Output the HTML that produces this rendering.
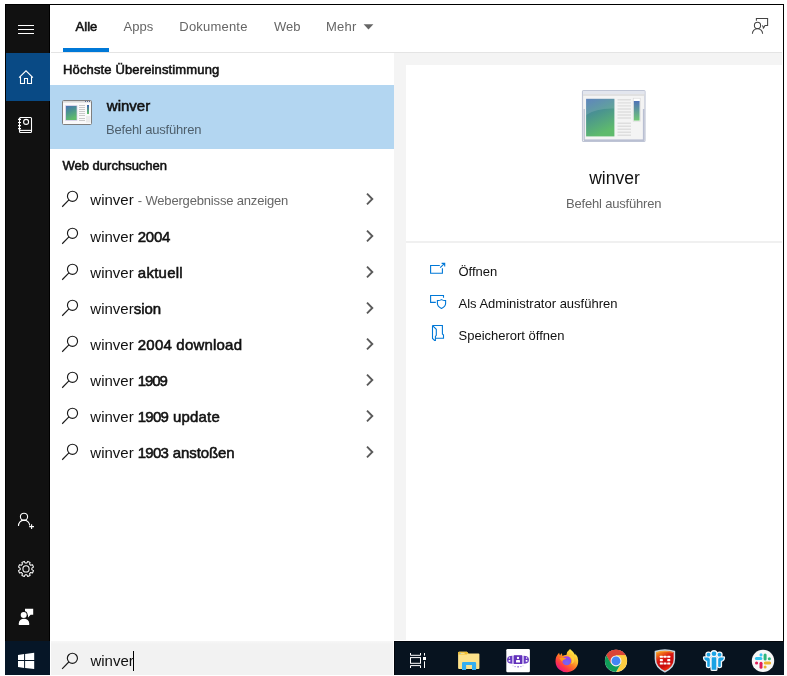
<!DOCTYPE html>
<html>
<head>
<meta charset="utf-8">
<title>winver</title>
<style>
html,body{margin:0;padding:0;}
body{width:787px;height:676px;background:#fff;position:relative;overflow:hidden;font-family:"Liberation Sans",sans-serif;color:#000;}
.a{position:absolute;}
.t{position:absolute;white-space:nowrap;line-height:1;}
svg{position:absolute;overflow:visible;}
.row{position:absolute;left:50px;width:344px;height:36px;}
.row .q{position:absolute;left:40.3px;top:11px;font-size:15px;line-height:1;white-space:nowrap;color:#111;}
.row .q b,.sb{font-weight:normal;-webkit-text-stroke:0.55px currentColor;}
</style>
</head>
<body>
<div id="all" style="position:absolute;left:0;top:0;width:787px;height:676px;will-change:transform;">
<!-- frame -->
<div class="a" style="left:5px;top:4px;width:779px;height:1px;background:#000;"></div>
<div class="a" style="left:783px;top:4px;width:1px;height:638px;background:#000;"></div>

<!-- sidebar -->
<div class="a" style="left:5px;top:4px;width:1px;height:637px;background:#000;z-index:3;"></div>
<div class="a" id="sidebar" style="left:5px;top:5px;width:45px;height:636px;background:#111;"></div>
<div class="a" style="left:5px;top:53px;width:45px;height:48px;background:#094a85;"></div>

<div class="a" style="left:49px;top:5px;width:1px;height:48px;background:#000;"></div>
<div class="a" style="left:49px;top:101px;width:1px;height:540px;background:#000;"></div>
<!-- tabs -->
<div id="tab1" class="t sb" style="left:75.6px;top:20px;font-size:13px;color:#111;">Alle</div>
<div class="t" id="tab2" style="left:123.5px;top:20px;font-size:13px;color:#666;">Apps</div>
<div class="t" id="tab3" style="left:179.3px;top:20px;font-size:13px;color:#666;letter-spacing:0.2px;">Dokumente</div>
<div class="t" id="tab4" style="left:274px;top:20px;font-size:13px;color:#666;">Web</div>
<div class="t" id="tab5" style="left:326px;top:20px;font-size:13px;color:#666;letter-spacing:0.25px;">Mehr</div>
<div class="a" style="left:63px;top:48px;width:46px;height:4px;background:#0078d7;"></div>
<div class="a" style="left:51px;top:52px;width:731px;height:1px;background:#e4e4e4;"></div>

<!-- right gutter + card -->
<div class="a" style="left:394px;top:53px;width:388px;height:12px;background:#f4f4f4;"></div>
<div class="a" style="left:394px;top:53px;width:12px;height:587px;background:#f4f4f4;"></div>
<div class="a" style="left:406px;top:241px;width:376px;height:2px;background:#f0f0f0;"></div>

<!-- left list -->
<div class="t sb" id="h1" style="left:63px;top:63px;font-size:13px;color:#111;letter-spacing:0.14px;">Höchste Übereinstimmung</div>
<div class="a" style="left:50px;top:85px;width:344px;height:64px;background:#b3d6f1;"></div>
<div class="t sb" id="best" style="left:106.8px;top:98px;font-size:15px;color:#111;">winver</div>
<div class="t" id="bestsub" style="left:106px;top:123px;font-size:13px;color:#4e5f6c;letter-spacing:-0.19px;">Befehl ausführen</div>
<div class="t sb" id="h2" style="left:62.5px;top:159px;font-size:13px;color:#111;">Web durchsuchen</div>

<div class="row" style="top:181px;"><div class="q">winver <span style="font-size:13px;color:#666;letter-spacing:-0.17px;">- Webergebnisse anzeigen</span></div></div>
<div class="row" style="top:218px;"><div class="q">winver <b id="r1" style="letter-spacing:-0.3px;">2004</b></div></div>
<div class="row" style="top:254px;"><div class="q">winver <b id="r2" style="letter-spacing:0.25px;">aktuell</b></div></div>
<div class="row" style="top:290px;"><div class="q">winver<b id="r3">sion</b></div></div>
<div class="row" style="top:326px;"><div class="q">winver <b id="r4" style="letter-spacing:0.2px;">2004 download</b></div></div>
<div class="row" style="top:362px;"><div class="q">winver <b id="r5" style="letter-spacing:-1.1px;">1909</b></div></div>
<div class="row" style="top:398px;"><div class="q">winver <b id="r6" style="letter-spacing:0.15px;"><span style="letter-spacing:-0.8px;margin-right:0.8px;">1909</span> update</b></div></div>
<div class="row" style="top:434px;"><div class="q">winver <b id="r7" style="letter-spacing:-0.1px;"><span style="letter-spacing:-0.8px;margin-right:0.8px;">1903</span> anstoßen</b></div></div>

<!-- right card -->
<div class="t" id="ctitle" style="left:589.2px;top:169.5px;font-size:17.5px;color:#111;">winver</div>
<div class="t" id="csub" style="left:566px;top:197px;font-size:13px;color:#666;letter-spacing:-0.19px;">Befehl ausführen</div>
<div class="t" id="act1" style="left:458.5px;top:265px;font-size:13px;color:#111;">Öffnen</div>
<div class="t" id="act2" style="left:458.5px;top:297px;font-size:13px;color:#111;">Als Administrator ausführen</div>
<div class="t" id="act3" style="left:458.5px;top:329px;font-size:13px;color:#111;">Speicherort öffnen</div>

<!-- taskbar -->
<div class="a" style="left:5px;top:641px;width:779px;height:34px;background:#07131f;"></div>
<div class="a" style="left:5px;top:641px;width:45px;height:34px;background:#061627;"></div>
<div class="a" style="left:394px;top:641px;width:390px;height:1px;background:#02060c;"></div>
<div class="a" style="left:394px;top:641px;width:1px;height:34px;background:#02060c;"></div>
<div class="a" style="left:50px;top:641px;width:344px;height:34px;background:#fff;"></div>
<div class="a" style="left:51px;top:641px;width:342px;height:34px;background:linear-gradient(#f7f7f7,#f2f2f2 3px);"></div>
<div class="t" id="sbox" style="left:90.4px;top:653px;font-size:15px;color:#111;">winver</div>
<div class="a" style="left:133px;top:651px;width:1px;height:20px;background:#000;"></div>

<svg id="ov" width="787" height="676" viewBox="0 0 787 676" style="left:0;top:0;">
<defs>
<g id="mag" fill="none" stroke="#1a1a1a" stroke-width="1.15"><circle cx="0" cy="0" r="5.05"/><path d="M-3.6,3.7 L-10.3,10.5"/></g>
<g id="chev" fill="none" stroke="#5a5a5a" stroke-width="1.9"><path d="M-5.3,-5.3 L0,0 L-5.3,5.3"/></g>
<linearGradient id="pic" x1="0" y1="0" x2="0.35" y2="1"><stop offset="0" stop-color="#4873b4"/><stop offset="0.45" stop-color="#4a9390"/><stop offset="1" stop-color="#5fbb6c"/></linearGradient>
<linearGradient id="bar" x1="0" y1="0" x2="0" y2="1"><stop offset="0" stop-color="#3a62b0"/><stop offset="1" stop-color="#62c266"/></linearGradient>
</defs>

<!-- list icons -->
<use href="#mag" x="72.5" y="196.25"/>
<use href="#chev" x="372.3" y="199.00"/>
<use href="#mag" x="72.5" y="233.25"/>
<use href="#chev" x="372.3" y="236.00"/>
<use href="#mag" x="72.5" y="269.25"/>
<use href="#chev" x="372.3" y="272.00"/>
<use href="#mag" x="72.5" y="305.25"/>
<use href="#chev" x="372.3" y="308.00"/>
<use href="#mag" x="72.5" y="341.25"/>
<use href="#chev" x="372.3" y="344.00"/>
<use href="#mag" x="72.5" y="377.25"/>
<use href="#chev" x="372.3" y="380.00"/>
<use href="#mag" x="72.5" y="413.25"/>
<use href="#chev" x="372.3" y="416.00"/>
<use href="#mag" x="72.5" y="449.25"/>
<use href="#chev" x="372.3" y="452.00"/>

<!-- tab caret -->
<path d="M363.6,24.2 h9.8 l-4.9,5.2 z" fill="#666"/>

<!-- sidebar icons -->
<g fill="#fff"><rect x="18" y="25" width="16" height="1"/><rect x="18" y="29" width="16" height="1"/><rect x="18" y="33" width="16" height="1"/></g>
<g fill="none" stroke="#fff" stroke-width="1.1">
<path d="M19.1,77.7 L26,70.8 L32.9,77.7"/>
<path d="M20.5,76.6 V83.5 H24.5 V78.5 H27.5 V83.5 H31.5 V76.6"/>
<!-- notebook -->
<rect x="19.5" y="117.5" width="12" height="15" rx="1"/>
<path d="M19.5,130.4 H31.5"/>
<path d="M18,119.4 h3 M18,122.5 h3 M18,125.6 h3 M18,128.6 h3"/>
<circle cx="26.1" cy="121.9" r="2.5"/>
<!-- person plus -->
<circle cx="24" cy="516.8" r="3.6"/>
<path d="M18.5,526 a5.6,5.6 0 0 1 11.2,-0.5"/>
<path d="M29.2,526.6 h4.8 M31.6,524.2 v4.8"/>
</g>
<!-- gear -->
<g fill="none" stroke="#fff" stroke-width="1.05" stroke-linejoin="round">
<path d="M31.85,569.67 L33.50,570.63 L32.53,572.98 L30.68,572.49 L29.59,573.58 L30.08,575.43 L27.73,576.40 L26.77,574.75 L25.23,574.75 L24.27,576.40 L21.92,575.43 L22.41,573.58 L21.32,572.49 L19.47,572.98 L18.50,570.63 L20.15,569.67 L20.15,568.13 L18.50,567.17 L19.47,564.82 L21.32,565.31 L22.41,564.22 L21.92,562.37 L24.27,561.40 L25.23,563.05 L26.77,563.05 L27.73,561.40 L30.08,562.37 L29.59,564.22 L30.68,565.31 L32.53,564.82 L33.50,567.17 L31.85,568.13 z"/>
<circle cx="26" cy="568.9" r="3.1"/>
</g>
<!-- feedback filled -->
<g fill="#fff">
<path d="M25,608.8 h8.2 v6 h-2.6 l-2.6,2.6 v-2.6 h-3 z"/>
</g>
<circle cx="23.7" cy="615" r="3.9" fill="#111"/>
<g fill="#fff">
<circle cx="23.7" cy="615" r="3"/>
<path d="M18.8,625 v-1.5 a5.2,4.8 0 0 1 10.4,0 v1.5 z"/>
</g>

<!-- top-right feedback outline -->
<g fill="none" stroke="#444" stroke-width="1.05">
<path d="M756.4,20.8 V18.5 H767.6 V25.5 H765 L763.3,28.6 V27 L762.3,25.5"/>
<circle cx="757.5" cy="25.4" r="3.1"/>
<path d="M752.4,33.8 a5.1,5.1 0 0 1 10.2,0"/>
</g>

<!-- small winver icon -->
<g>
<rect x="62.5" y="100.5" width="29" height="24" rx="1" fill="#fafafa" stroke="#7f7f7f" stroke-width="1"/>
<rect x="63" y="101" width="28" height="1.6" fill="#d9d9d9"/>
<rect x="85" y="101" width="1" height="1" fill="#5a6a94"/><rect x="87" y="101" width="1" height="1" fill="#5a6a94"/><rect x="89" y="101" width="1" height="1" fill="#5a6a94"/>
<rect x="65.3" y="105.3" width="12" height="15.4" fill="#c9c4e2"/>
<rect x="66" y="106" width="10.6" height="14" fill="url(#pic)"/>
<g stroke="#bdbdbd" stroke-width="0.8"><path d="M79,105.5h6M79,107.5h6M79,109.5h6M79,111.5h6M79,113.5h6M79,115.5h6M79,118.5h6M79,120.5h6"/></g>
<rect x="87" y="105" width="2" height="9" fill="url(#bar)"/>
<rect x="86" y="116" width="4.5" height="6.5" fill="#ececec"/>
</g>

<!-- big winver icon -->
<g>
<rect x="582.5" y="90.5" width="62.5" height="51" rx="1" fill="#f3f3f3" stroke="#c0c6d6" stroke-width="1.2"/>
<rect x="583" y="91" width="61.5" height="3.2" fill="#e3e6ee"/>
<rect x="583" y="94.2" width="61.5" height="1.6" fill="#dcdcdc"/>
<rect x="583.6" y="109" width="1.2" height="31" fill="#b9bfd2"/><rect x="642.8" y="109" width="1.6" height="31" fill="#b9bfd2"/>
<rect x="584" y="139.4" width="60" height="1.8" fill="#b9bfd2"/>
<rect x="585.5" y="96" width="57" height="43" fill="#f4f4f4"/>
<rect x="586.1" y="98.8" width="28.3" height="37.6" fill="url(#pic)"/>
<path d="M586.1,115 q10,-7 28.3,-6.5 v-9.7 h-28.3 z" fill="#fff" opacity="0.13"/>
<g stroke="#dedede" stroke-width="1.4"><path d="M617.5,99.8h13.5M617.5,102.9h13.5M617.5,105.9h13.5M617.5,109h13.5M617.5,112h13.5M617.5,115h13.5M617.5,118h13.5M617.5,123.3h13.5M617.5,126.2h13.5M617.5,129.2h13.5M617.5,132.2h13.5M617.5,135.2h13.5"/></g>
<rect x="633.2" y="98.2" width="7" height="23" fill="#fff" stroke="#d5d5d5" stroke-width="0.6"/>
<rect x="633.8" y="101" width="5.8" height="19.6" fill="url(#bar)" opacity="0.9"/>
</g>

<!-- action icons -->
<g fill="none" stroke="#0078d7" stroke-width="1.1">
<path d="M439.8,265.5 H430.6 V273.3 H442.4 V268.2"/>
<path d="M440.2,267.7 L444.6,263.4 M441.6,263.4 H444.7 V266.4"/>
<path d="M443.5,297.7 V295.5 H430.6 V302.4 H435.8"/>
<path d="M437.4,300.6 q2.6,0 4.1,-1 q1.5,1 4.1,1 v3 q0,3 -4.1,4.9 q-4.1,-1.9 -4.1,-4.9 z"/>
<path d="M432.5,325.5 H442.4 V334 L443.5,335 V338.3 H435.4"/>
<path d="M432.5,325.5 V338.4 L434.6,340.5 H435.4 V336.5 L436.3,335.4 V329.3 L432.8,325.8"/>
</g>

<!-- taskbar icons -->
<!-- windows logo -->
<g fill="#fff">
<path d="M18,655 L24.1,654.1 V660 H18 z"/><path d="M25.1,654 L34.2,652.8 V660 H25.1 z"/>
<path d="M18,661 H24.1 V667.9 L18,667 z"/><path d="M25.1,661 H34.2 V669.1 L25.1,668 z"/>
</g>
<use href="#mag" x="72.4" y="658.3"/>
<!-- task view -->
<g fill="none" stroke="#fff" stroke-width="1">
<path d="M410.5,653 V655.3 H420.5 V653"/>
<rect x="410.5" y="657.6" width="10" height="5.7"/>
<path d="M410.5,668 V665.6 H420.5 V668"/>
<path d="M424.5,653 V655.6 M424.5,661.3 V668"/>
</g>
<rect x="423" y="657" width="3" height="3" fill="#fff"/>

<!-- explorer -->
<g>
<path d="M458.1,653 q0,-1.2 1.2,-1.2 h7.6 l1.6,1.6 h10 q0.9,0 0.9,0.9 v13.6 q0,1 -1,1 h-19.3 q-1,0 -1,-1 z" fill="#fde28a"/>
<path d="M458.1,654.6 v-1.6 q0,-1.2 1.2,-1.2 h7.6 l1.4,1.4 l-1.4,1.4 z" fill="#f2be2f"/>
<rect x="460" y="652.8" width="4.6" height="1" fill="#f6e6a8"/>
<rect x="459.6" y="652.8" width="1.2" height="1" fill="#7fc7d9"/>
<path d="M462,670 v-7 q0,-1.1 1.1,-1.1 h11.9 q1.1,0 1.1,1.1 v7 h-4.1 v-5.1 h-5.9 v5.1 z" fill="#35aef0"/>
</g>
<!-- purple app -->
<g>
<rect x="506.3" y="649" width="23.6" height="23.3" rx="1.2" fill="#fff"/>
<path d="M512.3,655.8 v8 q-2.400,0 -3.600,-0.700 q-1.700,-0.900 -1.700,-3.300 q0,-2.400 1.700,-3.300 q1.200,-0.700 3.600,-0.700 z" fill="#6a3cc4"/>
<path d="M523.7,655.8 v8 q2.400,0 3.600,-0.700 q1.700,-0.900 1.700,-3.300 q0,-2.400 -1.700,-3.300 q-1.200,-0.700 -3.600,-0.700 z" fill="#6a3cc4"/>
<rect x="512.3" y="655.8" width="1.5" height="8" fill="#b9a3e6"/><rect x="522.2" y="655.8" width="1.5" height="8" fill="#b9a3e6"/>
<rect x="513.8" y="655.2" width="8.3" height="8.8" fill="#6231ba"/>
<circle cx="518" cy="658" r="1.15" fill="#fff"/><rect x="516" y="659.9" width="4" height="2.7" rx="0.6" fill="#fff"/>
<circle cx="509.4" cy="658" r="0.7" fill="#fff"/><rect x="508.6" y="660" width="1.7" height="1.7" fill="#fff"/>
<circle cx="526.6" cy="658" r="0.7" fill="#fff"/><rect x="525.7" y="660" width="1.7" height="1.7" fill="#fff"/>
<g fill="#8f6fd6"><rect x="514.5" y="666.2" width="1.2" height="0.9"/><rect x="517.3" y="666.3" width="1.6" height="1.1" fill="#6a3cc4"/><rect x="520.3" y="666.2" width="1.2" height="0.9"/><rect x="512.5" y="665.5" width="1" height="0.7" opacity="0.6"/><rect x="522.5" y="665.5" width="1" height="0.7" opacity="0.6"/></g>
</g>
<!-- firefox -->
<defs>
<linearGradient id="ffg" x1="0.85" y1="0.1" x2="0.2" y2="0.95"><stop offset="0" stop-color="#fff24a"/><stop offset="0.28" stop-color="#ffbd2f"/><stop offset="0.55" stop-color="#ff7226"/><stop offset="0.78" stop-color="#ff3647"/><stop offset="1" stop-color="#e31587"/></linearGradient>
<radialGradient id="ffp" cx="0.5" cy="0.75" r="0.8"><stop offset="0" stop-color="#6f6ef0"/><stop offset="0.6" stop-color="#8a4cf0"/><stop offset="1" stop-color="#b53af0"/></radialGradient>
</defs>
<g>
<path d="M570,648.9 q-3.2,2.2 -3.6,6.2 q-2.3,-0.2 -3.9,0.9 q-0.2,-1.6 -0.9,-2.8 q-1,0.9 -1.5,2.2 q-0.7,-1 -1,-2.6 q-3.7,3.6 -3.6,8.6 q0.2,5.1 3.7,8.1 q3.4,2.9 8.2,2.7 q4.9,-0.3 8,-3.6 q3,-3.3 2.8,-8 q-0.2,-4.300 -2.9,-7.200 q0.2,1 0,1.800 q-1.600,-3.500 -5.300,-6.300 z" fill="url(#ffg)"/>
<circle cx="566.7" cy="660.7" r="4.5" fill="url(#ffp)"/>
<path d="M559.2,658.6 q2.2,-1.400 4.400,-0.900 q1.500,0.300 3,0.100 q-0.800,1.300 -2.300,1.700 q-1.700,0.500 -2.100,2.200 q-1.300,-1.900 -3,-3.100 z" fill="#ff9a1c"/>
<path d="M568.600,656.300 q2.800,0.700 3.500,3.300 q0.500,2.600 -1.100,4.700 q2.500,-0.800 3.300,-3.400 q0.600,-3 -1.800,-5 q-1.900,-0.700 -3.900,0.400 z" fill="#ffcf3d" opacity="0.95"/>
</g>
<!-- chrome -->
<g>
<circle cx="616" cy="660.9" r="11.1" fill="#fff"/>
<path d="M616,660.9 L606.39,655.35 A11.1,11.1 0 0 1 625.61,655.35 z" fill="#db4437"/>
<path d="M606.39,655.35 A11.1,11.1 0 0 1 625.61,655.35 L616,655.35 z" fill="#db4437"/>
<path d="M625.61,655.35 A11.1,11.1 0 0 1 616,672 L620.8,663.7 L616,655.35 z" fill="#ffcd40"/>
<path d="M616,672 A11.1,11.1 0 0 1 606.39,655.35 L611.2,663.7 L620.8,663.7 z" fill="#0f9d58"/>
<path d="M606.39,655.35 L611.2,663.7 L616,660.9 z" fill="#0f9d58"/>
<path d="M616,655.35 H625.61 L620.8,663.7 z" fill="#ffcd40"/>
<path d="M606.39,655.35 L616,655.35 L611.2,663.7 z" fill="#db4437"/>
<circle cx="616" cy="660.9" r="5.5" fill="#f1f1f1"/>
<circle cx="616" cy="660.9" r="4.4" fill="#4285f4"/>
</g>
<!-- red shield -->
<defs>
<linearGradient id="shg" x1="0.1" y1="0" x2="0.55" y2="1"><stop offset="0" stop-color="#fbb41c"/><stop offset="0.22" stop-color="#f06a18"/><stop offset="0.45" stop-color="#d81512"/><stop offset="0.75" stop-color="#c90d0d"/><stop offset="1" stop-color="#ff3a12"/></linearGradient>
</defs>
<g>
<path d="M655.4,651.5 q4.800,-1.500 9.500,-1.500 q4.700,0 9.500,1.500 v7.500 q0,8.400 -9.500,12.700 q-9.500,-4.300 -9.500,-12.700 z" fill="url(#shg)" stroke="#c9d8e2" stroke-width="1.500"/>
<path d="M656.6,652.600 q4.200,-1.200 8.300,-1.200 q4.100,0 8.300,1.200" fill="none" stroke="#f7c65a" stroke-width="0.700" opacity="0.700"/>
<g fill="#fff">
<rect x="659.8" y="655.7" width="3.100" height="2.100" rx="0.600"/><rect x="663.500" y="655.7" width="3.100" height="2.100" rx="0.600"/><rect x="667.200" y="655.7" width="3.100" height="2.100" rx="0.600"/>
<rect x="659.8" y="659.100" width="3.100" height="2.100" rx="0.600"/><rect x="667.200" y="659.100" width="3.100" height="2.100" rx="0.600"/>
<rect x="659.8" y="662.500" width="3.100" height="2.100" rx="0.600"/><rect x="663.500" y="662.500" width="3.100" height="2.100" rx="0.600"/><rect x="667.200" y="662.500" width="3.100" height="2.100" rx="0.600"/>
</g>
</g>
<!-- people -->
<g id="ppl">
<g fill="#f4f7fa" stroke="#f4f7fa" stroke-width="2.600" stroke-linejoin="round">
<circle cx="714" cy="653.7" r="2.300"/><circle cx="708.5" cy="654.7" r="1.900"/><circle cx="719.5" cy="654.7" r="1.900"/>
<rect x="711.700" y="657.300" width="4.600" height="12.500" rx="0.600"/>
<path d="M704.200,657.500 h3.600 q2,0 2,2 v7 q-1.300,0.900 -2.600,0 v-5.500 q-3,-0.800 -3,-3.500 z"/>
<path d="M723.800,657.500 h-3.600 q-2,0 -2,2 v7 q1.300,0.900 2.600,0 v-5.500 q3,-0.800 3,-3.500 z"/>
</g>
<g fill="#1ba3e4">
<circle cx="714" cy="653.7" r="2.300"/><circle cx="708.5" cy="654.7" r="1.900"/><circle cx="719.5" cy="654.7" r="1.900"/>
<rect x="711.700" y="657.300" width="4.600" height="12.500" rx="0.600"/>
<path d="M704.200,657.500 h3.600 q2,0 2,2 v7 q-1.300,0.900 -2.600,0 v-5.500 q-3,-0.800 -3,-3.500 z"/>
<path d="M723.800,657.500 h-3.600 q-2,0 -2,2 v7 q1.300,0.900 2.600,0 v-5.500 q3,-0.800 3,-3.500 z"/>
</g>
</g>
<!-- slack -->
<g>
<circle cx="763" cy="660.900" r="11.200" fill="#f7f7f7"/>
<g stroke-linecap="round" stroke-width="3" fill="none">
<path d="M761,654.800 v0.100" stroke="#36c5f0"/><path d="M756.400,658.600 h4.500" stroke="#36c5f0"/>
<path d="M765.100,654.900 v4" stroke="#2eb67d"/><path d="M769.300,658.700 h0.100" stroke="#2eb67d"/>
<path d="M765.300,663 h4.300" stroke="#ecb22e"/><path d="M765.100,667 v0.100" stroke="#ecb22e"/>
<path d="M761,663.200 v4" stroke="#e01e5a"/><path d="M756.500,663.100 h0.100" stroke="#e01e5a"/>
</g>
</g>
</svg>
</div>
</body>
</html>
